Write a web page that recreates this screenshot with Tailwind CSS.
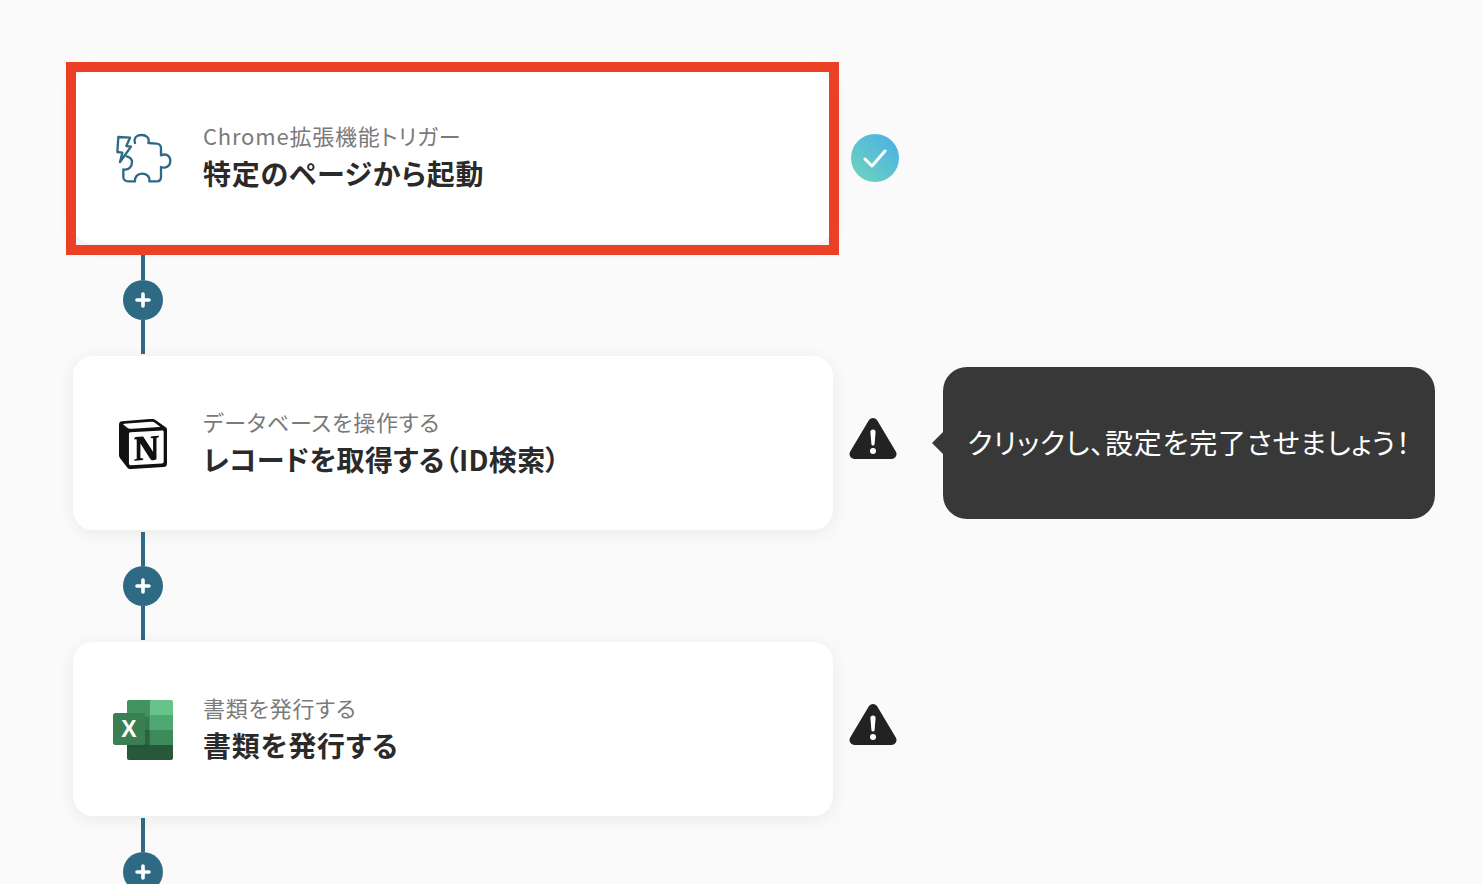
<!DOCTYPE html>
<html lang="ja">

<head>
  <meta charset="utf-8">
  <title>フロー</title>
  <script src="https://cdn.jsdelivr.net/npm/@tailwindcss/browser@4"></script>
</head>

<body class="bg-[#fafafa] overflow-hidden font-['Noto_Sans_CJK_JP','Noto_Sans',sans-serif] [font-feature-settings:'palt'] tracking-[0.8px]">
  <div class="relative h-[884px] overflow-hidden pl-[73px] pt-[70px]">

    <!-- faint edge of the block above -->
    <div class="absolute left-[990px] top-0 h-px w-[440px] bg-[#f7f7f7]"></div>

    <!-- step 1 -->
    <div class="flex items-center">
      <div class="flex h-[174px] w-[760px] items-center rounded-[20px] bg-white pl-10 shadow-[0_3px_18px_rgba(0,0,0,0.07)]">
        <div class="flex h-[60px] w-[60px] shrink-0 items-center justify-center">
          <svg class="ml-[2px] mt-[3px] shrink-0" width="58" height="52" viewBox="45 38 174 156" fill="none" stroke="#2f6a85" stroke-width="7" stroke-linejoin="round" stroke-linecap="round">
            <path d="M55 50 L90 52 L79 77 L93 79 L60 125 L67 97 L52 95 Z" />
            <path d="M105 68 C100 50 112 44 125 44 C138 44 150 52 145 68 L170 70 C178 70 183 76 183 84 L183 105 C200 98 211 108 211 122 C211 136 198 146 183 140 L183 170 C183 178 178 183 170 183 L148 183 C150 168 140 160 126 160 C112 160 104 170 105 183 L84 183 C76 183 70 178 70 170 L70 147 C86 151 96 138 96 126 C96 116 90 110 80 108" />
          </svg>
        </div>
        <div class="mb-[3px] ml-[30px] flex flex-col">
          <p class="text-[22px] leading-[32px] text-[#7a7a7a]">Chrome拡張機能トリガー</p>
          <p class="mt-[3px] text-[28px] leading-[38px] font-semibold text-[#2a2a2a]">特定のページから起動</p>
        </div>
      </div>
      <div class="ml-[18px] mt-[2px] flex h-12 w-12 items-center justify-center rounded-full bg-linear-to-tr from-[#70d4b8] to-[#4aaee6]">
        <svg width="24" height="24" viewBox="0 0 24 24" fill="none" stroke="white" stroke-width="3" stroke-linecap="round" stroke-linejoin="round">
          <path d="M2 13 L9 20 L22 5" />
        </svg>
      </div>
    </div>

    <!-- red highlight -->
    <div class="absolute left-[66px] top-[62px] h-[193px] w-[773px] border-10 border-[#eb4025]"></div>

    <div class="ml-[50px] flex h-[112px] w-10 flex-col items-center">
      <div class="mt-[2px] h-[34px] w-1 bg-[#2f6a85]"></div>
      <div class="flex h-10 w-10 shrink-0 items-center justify-center rounded-full bg-[#2f6a85]">
        <svg width="16" height="16" viewBox="0 0 16 16" stroke="white" stroke-width="3.6" stroke-linecap="round">
          <path d="M8 2 V14 M2 8 H14" />
        </svg>
      </div>
      <div class="h-[34px] w-1 bg-[#2f6a85]"></div>
    </div>

    <!-- step 2 -->
    <div class="flex items-center">
      <div class="flex h-[174px] w-[760px] items-center rounded-[20px] bg-white pl-10 shadow-[0_3px_18px_rgba(0,0,0,0.07)]">
        <div class="flex h-[60px] w-[60px] shrink-0 items-center justify-center">
          <svg class="mt-[2px]" width="50" height="50" viewBox="0 0 24 24" fill="#111111">
            <path fill-rule="evenodd" d="M4.459 4.208c.746.606 1.026.56 2.428.466l13.215-.793c.28 0 .047-.28-.046-.326L17.86 1.968c-.42-.326-.981-.7-2.055-.607L3.01 2.295c-.466.046-.56.28-.374.466zm.793 3.08v13.904c0 .747.373 1.027 1.214.98l14.523-.84c.841-.046.935-.56.935-1.167V6.354c0-.606-.233-.933-.748-.887l-15.177.887c-.56.047-.747.327-.747.933zm14.337.745c.093.42 0 .84-.42.888l-.7.14v10.264c-.608.327-1.168.514-1.635.514-.748 0-.935-.234-1.495-.933l-4.577-7.186v6.952L12.21 19s0 .84-1.168.84l-3.222.186c-.093-.186 0-.653.327-.746l.84-.233V9.854L7.822 9.76c-.094-.42.14-1.026.793-1.073l3.456-.233 4.764 7.279v-6.44l-1.215-.139c-.093-.514.28-.887.747-.933zM1.936 1.035l13.31-.98c1.634-.14 2.055-.047 3.082.7l4.249 2.986c.7.513.934.653.934 1.213v16.378c0 1.026-.373 1.634-1.68 1.726l-15.458.934c-.98.047-1.448-.093-1.962-.747l-3.129-4.06c-.56-.747-.793-1.306-.793-1.96V2.667c0-.839.374-1.54 1.447-1.632z" />
          </svg>
        </div>
        <div class="mb-[3px] ml-[30px] flex flex-col">
          <p class="text-[22px] leading-[32px] text-[#7a7a7a]">データベースを操作する</p>
          <p class="mt-[3px] text-[28px] leading-[38px] font-semibold tracking-[0.3px] text-[#2a2a2a]">レコードを取得する（ID検索）</p>
        </div>
      </div>
      <svg class="mb-2 ml-[16px] shrink-0" width="48" height="44" viewBox="0 0 48 44">
        <path d="M24 6 L42.5 37 H5.5 Z" fill="#222222" stroke="#222222" stroke-width="10" stroke-linejoin="round" />
        <path d="M21.4 15 a2.6 2.6 0 0 1 5.2 0 L25.6 27 a1.6 1.6 0 0 1 -3.2 0 Z" fill="white" />
        <circle cx="24" cy="34" r="3" fill="white" />
      </svg>
      <div class="relative ml-[46px] flex h-[152px] w-[492px] items-center justify-center rounded-[24px] bg-[#383838] pb-[3px] text-[28px] font-normal text-white">
        <span class="absolute left-[-11px] top-[65px] h-0 w-0 border-y-[11px] border-r-[11px] border-y-transparent border-r-[#383838]"></span>
        クリックし、設定を完了させましょう！
      </div>
    </div>

    <div class="ml-[50px] flex h-[112px] w-10 flex-col items-center">
      <div class="mt-[2px] h-[34px] w-1 bg-[#2f6a85]"></div>
      <div class="flex h-10 w-10 shrink-0 items-center justify-center rounded-full bg-[#2f6a85]">
        <svg width="16" height="16" viewBox="0 0 16 16" stroke="white" stroke-width="3.6" stroke-linecap="round">
          <path d="M8 2 V14 M2 8 H14" />
        </svg>
      </div>
      <div class="h-[34px] w-1 bg-[#2f6a85]"></div>
    </div>

    <!-- step 3 -->
    <div class="flex items-center">
      <div class="flex h-[174px] w-[760px] items-center rounded-[20px] bg-white pl-10 shadow-[0_3px_18px_rgba(0,0,0,0.07)]">
        <svg class="mt-[2px] shrink-0" width="60" height="60" viewBox="0 0 60 60">
          <path d="M16 0 H37 V15 H14 V2 A2 2 0 0 1 16 0 Z" fill="#41925f" />
          <path d="M37 0 H58 A2 2 0 0 1 60 2 V15 H37 Z" fill="#66c488" />
          <rect x="14" y="15" width="23" height="15" fill="#3f9160" />
          <rect x="37" y="15" width="23" height="15" fill="#4fa873" />
          <rect x="14" y="30" width="23" height="15" fill="#2f6f47" />
          <rect x="37" y="30" width="23" height="15" fill="#3d8a5a" />
          <path d="M14 45 H60 V58 A2 2 0 0 1 58 60 H16 A2 2 0 0 1 14 58 Z" fill="#27583a" />
          <rect x="14" y="17" width="22" height="31" fill="#1f4d33" opacity="0.35" />
          <rect x="0" y="13" width="32" height="32" rx="2.5" fill="#3a7f52" />
          <text x="16" y="37" text-anchor="middle" fill="white" font-family="'Liberation Sans',sans-serif" font-weight="700" font-size="23" letter-spacing="0">X</text>
        </svg>
        <div class="mb-[3px] ml-[30px] flex flex-col">
          <p class="text-[22px] leading-[32px] text-[#7a7a7a]">書類を発行する</p>
          <p class="mt-[3px] text-[28px] leading-[38px] font-semibold text-[#2a2a2a]">書類を発行する</p>
        </div>
      </div>
      <svg class="mb-2 ml-[16px] shrink-0" width="48" height="44" viewBox="0 0 48 44">
        <path d="M24 6 L42.5 37 H5.5 Z" fill="#222222" stroke="#222222" stroke-width="10" stroke-linejoin="round" />
        <path d="M21.4 15 a2.6 2.6 0 0 1 5.2 0 L25.6 27 a1.6 1.6 0 0 1 -3.2 0 Z" fill="white" />
        <circle cx="24" cy="34" r="3" fill="white" />
      </svg>
    </div>

    <div class="ml-[50px] flex h-[112px] w-10 flex-col items-center">
      <div class="mt-[2px] h-[34px] w-1 bg-[#2f6a85]"></div>
      <div class="flex h-10 w-10 shrink-0 items-center justify-center rounded-full bg-[#2f6a85]">
        <svg width="16" height="16" viewBox="0 0 16 16" stroke="white" stroke-width="3.6" stroke-linecap="round">
          <path d="M8 2 V14 M2 8 H14" />
        </svg>
      </div>
    </div>

  </div>
</body>

</html>
